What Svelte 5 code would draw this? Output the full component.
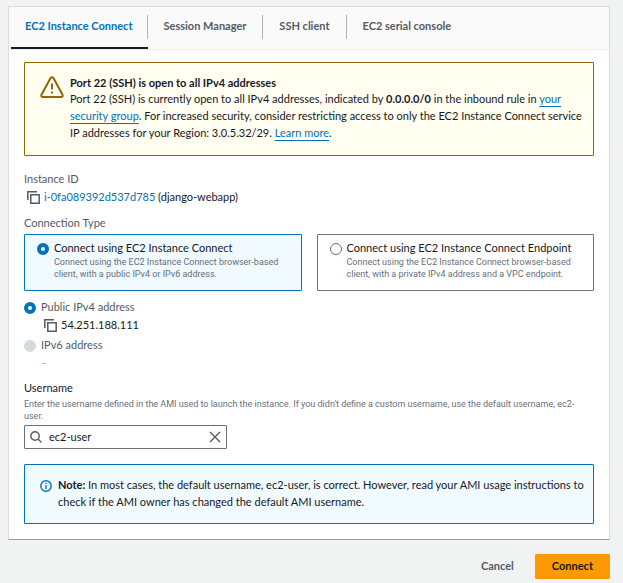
<script>
    const tabs = ["EC2 Instance Connect", "Session Manager", "SSH client", "EC2 serial console"];

    const connectionTypes = [
        {
            id: "direct",
            title: "Connect using EC2 Instance Connect",
            text: "Connect using the EC2 Instance Connect browser-based client, with a public IPv4 or IPv6 address."
        },
        {
            id: "endpoint",
            title: "Connect using EC2 Instance Connect Endpoint",
            text: "Connect using the EC2 Instance Connect browser-based client, with a private IPv4 address and a VPC endpoint."
        }
    ];

    let activeTab = tabs[0];
    let connectionType = "direct";
    let addressType = "ipv4";
    let username = "ec2-user";

    const copy = (text) => {
        navigator.clipboard?.writeText(text);
    };

    const clearUsername = () => {
        username = "";
    };
</script>

{#snippet copyIcon()}
    <svg width="13" height="13" viewBox="0 0 13 13" fill="none" stroke="#545b64" stroke-width="1.5">
        <path d="M0.8 9V0.8H10" />
        <path d="M3.8 3.8H12.2V12.2H3.8Z" />
    </svg>
{/snippet}

<div class="page">
    <main class="card">
        <div class="tabs" role="tablist">
            {#each tabs as tab}
                <button
                    class="tab"
                    class:active={tab === activeTab}
                    role="tab"
                    aria-selected={tab === activeTab}
                    on:click={() => (activeTab = tab)}
                ><span>{tab}</span></button>
            {/each}
        </div>

        <div class="content">
            <div class="alert warning">
                <svg class="warning-icon" width="24" height="24" viewBox="0 0 24 24" fill="none" stroke="#906806" stroke-width="2">
                    <path d="M10.4 3.2 1.6 19.4Q0.6 21.8 3 22H21Q23.4 21.8 22.4 19.4L13.6 3.2Q12 1.2 10.4 3.2Z" stroke-linejoin="round" />
                    <path d="M12 8.5V14.5M12 16.5V18.5" />
                </svg>
                <div>
                    <h2>Port 22 (SSH) is open to all IPv4 addresses</h2>
                    <p>
                        Port 22 (SSH) is currently open to all IPv4 addresses, indicated by <b>0.0.0.0/0</b> in the inbound rule in
                        <a href="#security-group">your security group</a>. For increased security, consider restricting access to only the EC2 Instance Connect service IP addresses for your Region: 3.0.5.32/29.
                        <a href="#learn-more">Learn more</a>.
                    </p>
                </div>
            </div>

            <div class="label instance-label">Instance ID</div>
            <div class="copy-row">
                <button class="icon-button" aria-label="Copy instance ID" on:click={() => copy("i-0fa089392d537d785")}>
                    {@render copyIcon()}
                </button>
                <span><a class="plain" href="#instance">i-0fa089392d537d785</a> (django-webapp)</span>
            </div>

            <div class="label type-label" id="type-label">Connection Type</div>
            <div class="tiles" role="radiogroup" aria-labelledby="type-label">
                {#each connectionTypes as type}
                    <label class="tile" class:selected={connectionType === type.id}>
                        <input type="radio" name="connection" value={type.id} bind:group={connectionType} />
                        <span>
                            <span class="tile-title">{type.title}</span>
                            <span class="hint">{type.text}</span>
                        </span>
                    </label>
                {/each}
            </div>

            <label class="radio-row">
                <input type="radio" name="address" value="ipv4" bind:group={addressType} />
                Public IPv4 address
            </label>
            <div class="copy-row indent">
                <button class="icon-button" aria-label="Copy IPv4 address" on:click={() => copy("54.251.188.111")}>
                    {@render copyIcon()}
                </button>
                <span>54.251.188.111</span>
            </div>
            <label class="radio-row">
                <input type="radio" name="address" value="ipv6" bind:group={addressType} disabled />
                IPv6 address
            </label>
            <div class="empty">–</div>

            <label class="username-label" for="username">Username</label>
            <div class="hint username-hint">
                Enter the username defined in the AMI used to launch the instance. If you didn't define a custom username, use the default username, ec2-user.
            </div>
            <div class="search">
                <svg width="12" height="12" viewBox="0 0 12 12" fill="none" stroke="#545b64" stroke-width="1.4">
                    <circle cx="5" cy="5" r="4.2" />
                    <path d="M8 8 11.4 11.4" />
                </svg>
                <input id="username" type="text" bind:value={username} />
                <button class="icon-button" aria-label="Clear username" on:click={clearUsername}>
                    <svg width="12" height="12" viewBox="0 0 12 12" fill="none" stroke="#545b64" stroke-width="1.4">
                        <path d="M1 1 11 11M11 1 1 11" />
                    </svg>
                </button>
            </div>

            <div class="alert info">
                <svg class="info-icon" width="12" height="12" viewBox="0 0 12 12" fill="none" stroke="#0073bb" stroke-width="1.4">
                    <circle cx="6" cy="6" r="5.2" />
                    <path d="M6 5V9M6 2.8V4.1" />
                </svg>
                <p>
                    <b>Note:</b> In most cases, the default username, ec2-user, is correct. However, read your AMI usage instructions to check if the AMI owner has changed the default AMI username.
                </p>
            </div>
        </div>
    </main>

    <footer class="actions">
        <button class="cancel">Cancel</button>
        <button class="connect">Connect</button>
    </footer>
</div>

<style>
    :global(body) {
        background-color: #f1f3f3;
    }

    .page {
        padding: 6px 13px 4px 8px;
        font-family: Lato, "Noto Sans", sans-serif;
        font-size: 11px;
        line-height: 16px;
        color: #16191f;
    }

    button,
    input {
        font: inherit;
        color: inherit;
    }

    button {
        padding: 0;
        border: none;
        background: none;
        cursor: pointer;
    }

    svg {
        display: block;
        flex: none;
    }

    .card {
        background-color: #fff;
        border: 1px solid #d9dddd;
        border-bottom-color: #959d9f;
    }

    .tabs {
        display: flex;
        padding-left: 2px;
        background-color: #fafafa;
        border-bottom: 1px solid #eaeded;
    }

    .tab {
        padding: 8px 0;
        border-bottom: 2px solid transparent;
        font-weight: 700;
        color: #545b64;
    }

    .tab span {
        display: block;
        padding: 3px 16px 5px;
        border-right: 1px solid #aab7b8;
        line-height: 16px;
    }

    .tab:first-child span {
        padding-left: 14px;
        padding-right: 14px;
    }

    .tab:last-child span {
        border-right: none;
    }

    .tab.active {
        color: #0073bb;
        border-bottom-color: #16191f;
    }

    .content {
        padding: 12px 15px 15px;
    }

    .alert {
        display: flex;
        gap: 6px;
        border: 1px solid;
        border-radius: 1px;
    }

    .alert h2,
    .alert p {
        margin: 0;
        font-size: 11px;
    }

    .alert h2 {
        line-height: 15px;
        font-weight: 700;
    }

    .alert p {
        line-height: 17px;
    }

    .warning {
        padding: 12px 8px 14px 15px;
        border-color: #906806;
        background-color: #fffef0;
    }

    .info {
        margin-top: 15px;
        padding: 11px 8px 13px 15px;
        border-color: #0073bb;
        background-color: #f1faff;
    }

    .info-icon {
        margin-top: 4px;
    }

    a {
        color: #0073bb;
        text-decoration: underline 1px;
        text-underline-offset: 3px;
        text-decoration-skip-ink: none;
    }

    a.plain {
        text-decoration: none;
    }

    .label {
        color: #545b64;
    }

    .instance-label {
        margin-top: 15px;
    }

    .copy-row {
        display: flex;
        align-items: center;
        gap: 4px;
        margin-top: 2px;
        padding-left: 3px;
    }

    .copy-row.indent {
        padding-left: 20px;
    }

    .type-label {
        margin-top: 10px;
    }

    .tiles {
        display: grid;
        grid-template-columns: 1fr 1fr;
        gap: 15px;
        margin: 3px 0 8px;
    }

    .tile {
        display: flex;
        gap: 5px;
        padding: 5px 12px 10px;
        border: 1px solid #687078;
        border-radius: 1px;
    }

    .tile.selected {
        border-color: #0073bb;
        background-color: #f1faff;
    }

    .tile-title {
        display: block;
    }

    .hint {
        display: block;
        font-family: Roboto, "Noto Sans", sans-serif;
        font-size: 9px;
        line-height: 12px;
        color: #687078;
    }

    .username-hint {
        padding-right: 4px;
    }

    input[type="radio"] {
        appearance: none;
        flex: none;
        box-sizing: border-box;
        width: 12px;
        height: 12px;
        margin: 3px 0 0;
        border: 1px solid #687078;
        border-radius: 50%;
        background-color: #fff;
    }

    input[type="radio"]:checked {
        border: 4px solid #0073bb;
    }

    input[type="radio"]:disabled {
        border-color: #d5dbdb;
        background-color: #d5dbdb;
    }

    .radio-row {
        display: flex;
        gap: 5px;
        color: #545b64;
    }

    .copy-row + .radio-row {
        margin-top: 4px;
    }

    .empty {
        margin-top: 2px;
        padding-left: 17px;
        color: #aab7b8;
    }

    .username-label {
        display: block;
        margin: 9px 0 2px;
    }

    .search {
        display: flex;
        align-items: center;
        gap: 7px;
        box-sizing: border-box;
        width: 203px;
        max-width: 100%;
        height: 24px;
        margin-top: 3px;
        padding: 0 5px;
        border: 1px solid #687078;
        border-radius: 1px;
        background-color: #fff;
    }

    .search input {
        flex: 1;
        min-width: 0;
        padding: 0;
        border: none;
        outline: none;
        background: none;
    }

    .actions {
        display: flex;
        justify-content: flex-end;
        margin-top: 14px;
    }

    .cancel,
    .connect {
        padding: 4px 17px 5px;
        border-radius: 1px;
        font-weight: 700;
    }

    .cancel {
        margin-right: 4px;
        color: #545b64;
    }

    .connect {
        background-color: #ff9900;
    }
</style>
